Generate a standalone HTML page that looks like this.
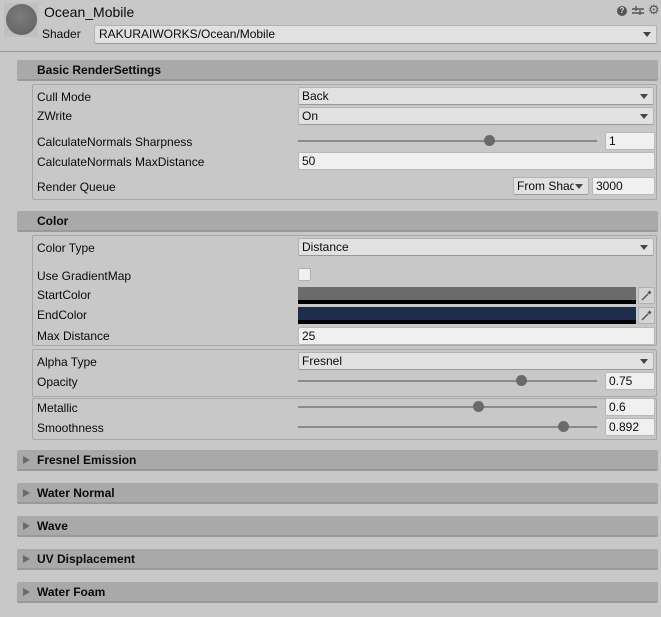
<!DOCTYPE html>
<html><head><style>
*{box-sizing:border-box;margin:0;padding:0}
body{width:661px;height:617px;background:#c8c8c8;font-family:"Liberation Sans",sans-serif;font-size:12px;color:#0a0a0a;position:relative;overflow:hidden}
.a{position:absolute}
.hdr{position:absolute;left:17px;width:641px;height:21px;background:#a9a9a9;border-bottom:2px solid #999;font-weight:bold;font-size:12px;line-height:20px;padding-left:20px;border-radius:2px}
.hdr .tri{position:absolute;left:6px;top:6px;width:0;height:0;border-left:7px solid #6a6a6a;border-top:4px solid transparent;border-bottom:4px solid transparent}
.box{position:absolute;left:32px;width:625px;border:1px solid #a8a8a8;border-radius:2px}
.lbl{position:absolute;left:37px;line-height:14px}
.dd{position:absolute;left:298px;width:356px;height:18px;background:#e1e1e1;border:1px solid #b2b2b2;border-bottom-color:#999;border-radius:2px;padding-left:3px;line-height:16px}
.dd:after{content:"";position:absolute;right:5px;top:6px;border-top:5px solid #444;border-left:4px solid transparent;border-right:4px solid transparent}
.fld{position:absolute;height:18px;background:#f0f0f0;border:1px solid #b8b8b8;border-radius:2px;padding-left:3px;line-height:16px}
.trk{position:absolute;left:298px;width:299px;height:2px;background:#8a8a8a}
.knob{position:absolute;width:11px;height:11px;border-radius:50%;background:#6a6a6a;top:-5px}
.eye{position:absolute;left:638px;width:17px;height:17px;background:#d4d4d4;border:1px solid #b0b0b0}
</style></head><body>
<div class="a" style="left:4px;top:3px;width:34px;height:34px;background:#c0c0c0"></div>
<div class="a" style="left:6px;top:4px;width:31px;height:31px;border-radius:50%;background:radial-gradient(circle at 45% 40%,#7c7c7c,#5e5e5e)"></div>
<div class="a" style="left:44px;top:4px;font-size:14px">Ocean_Mobile</div>
<div class="a" style="left:42px;top:27px;font-size:12px">Shader</div>
<div class="dd" style="left:94px;top:25px;width:563px;height:19px;padding-left:4px;line-height:17px">RAKURAIWORKS/Ocean/Mobile</div>
<div class="a" style="left:617px;top:6px;width:10px;height:10px;border-radius:50%;background:#555;color:#ddd;font-size:8px;font-weight:bold;text-align:center;line-height:10px">?</div>
<svg class="a" style="left:632px;top:5px" width="12" height="11" viewBox="0 0 12 11"><path d="M0 4H12M0 8H12M4 1V6M8 5V10" stroke="#555" stroke-width="1.4" fill="none"/></svg>
<div class="a" style="left:648px;top:2px;font-size:13px;color:#555">⚙</div>
<div class="a" style="left:0;top:51px;width:661px;height:1px;background:#999"></div>

<div class="hdr" style="top:60px">Basic RenderSettings</div>
<div class="box" style="top:84px;height:116px"></div>
<div class="lbl" style="top:90px">Cull Mode</div><div class="dd" style="top:87px">Back</div>
<div class="lbl" style="top:109px">ZWrite</div><div class="dd" style="top:107px">On</div>
<div class="lbl" style="top:135px">CalculateNormals Sharpness</div>
<div class="trk" style="top:140px"><div class="knob" style="left:186px"></div></div>
<div class="fld" style="left:605px;top:132px;width:50px">1</div>
<div class="lbl" style="top:155px">CalculateNormals MaxDistance</div>
<div class="fld" style="left:298px;top:152px;width:357px">50</div>
<div class="lbl" style="top:180px">Render Queue</div>
<div class="dd" style="left:513px;top:177px;width:76px"><span style="display:block;width:57px;overflow:hidden;white-space:nowrap">From Shader</span></div>
<div class="fld" style="left:592px;top:177px;width:63px">3000</div>

<div class="hdr" style="top:211px">Color</div>
<div class="box" style="top:235px;height:111px"></div>
<div class="box" style="top:349px;height:48px"></div>
<div class="box" style="top:398px;height:42px"></div>
<div class="lbl" style="top:241px">Color Type</div><div class="dd" style="top:238px">Distance</div>
<div class="lbl" style="top:269px">Use GradientMap</div>
<div class="a" style="left:298px;top:268px;width:13px;height:13px;background:#f0f0f0;border:1px solid #b0b0b0;border-radius:2px"></div>
<div class="lbl" style="top:288px">StartColor</div>
<div class="a" style="left:298px;top:287px;width:338px;height:17px;background:#6b6b6b;border-bottom:4px solid #000"></div>
<div class="eye" style="top:287px"><svg width="15" height="15" viewBox="0 0 15 15"><path d="M3 12L9 6M9 4L11 6M10 3L12 5" stroke="#555" stroke-width="1.5" fill="none"/></svg></div>
<div class="lbl" style="top:308px">EndColor</div>
<div class="a" style="left:298px;top:307px;width:338px;height:17px;background:#1f2d4c;border-bottom:4px solid #000"></div>
<div class="eye" style="top:307px"><svg width="15" height="15" viewBox="0 0 15 15"><path d="M3 12L9 6M9 4L11 6M10 3L12 5" stroke="#555" stroke-width="1.5" fill="none"/></svg></div>
<div class="lbl" style="top:329px">Max Distance</div>
<div class="fld" style="left:298px;top:327px;width:357px">25</div>
<div class="lbl" style="top:355px">Alpha Type</div><div class="dd" style="top:352px">Fresnel</div>
<div class="lbl" style="top:375px">Opacity</div>
<div class="trk" style="top:380px"><div class="knob" style="left:218px"></div></div>
<div class="fld" style="left:605px;top:372px;width:50px">0.75</div>
<div class="lbl" style="top:401px">Metallic</div>
<div class="trk" style="top:406px"><div class="knob" style="left:175px"></div></div>
<div class="fld" style="left:605px;top:398px;width:50px">0.6</div>
<div class="lbl" style="top:421px">Smoothness</div>
<div class="trk" style="top:426px"><div class="knob" style="left:260px"></div></div>
<div class="fld" style="left:605px;top:418px;width:50px">0.892</div>

<div class="hdr" style="top:450px"><span class="tri"></span>Fresnel Emission</div>
<div class="hdr" style="top:483px"><span class="tri"></span>Water Normal</div>
<div class="hdr" style="top:516px"><span class="tri"></span>Wave</div>
<div class="hdr" style="top:549px"><span class="tri"></span>UV Displacement</div>
<div class="hdr" style="top:582px"><span class="tri"></span>Water Foam</div>
</body></html>
